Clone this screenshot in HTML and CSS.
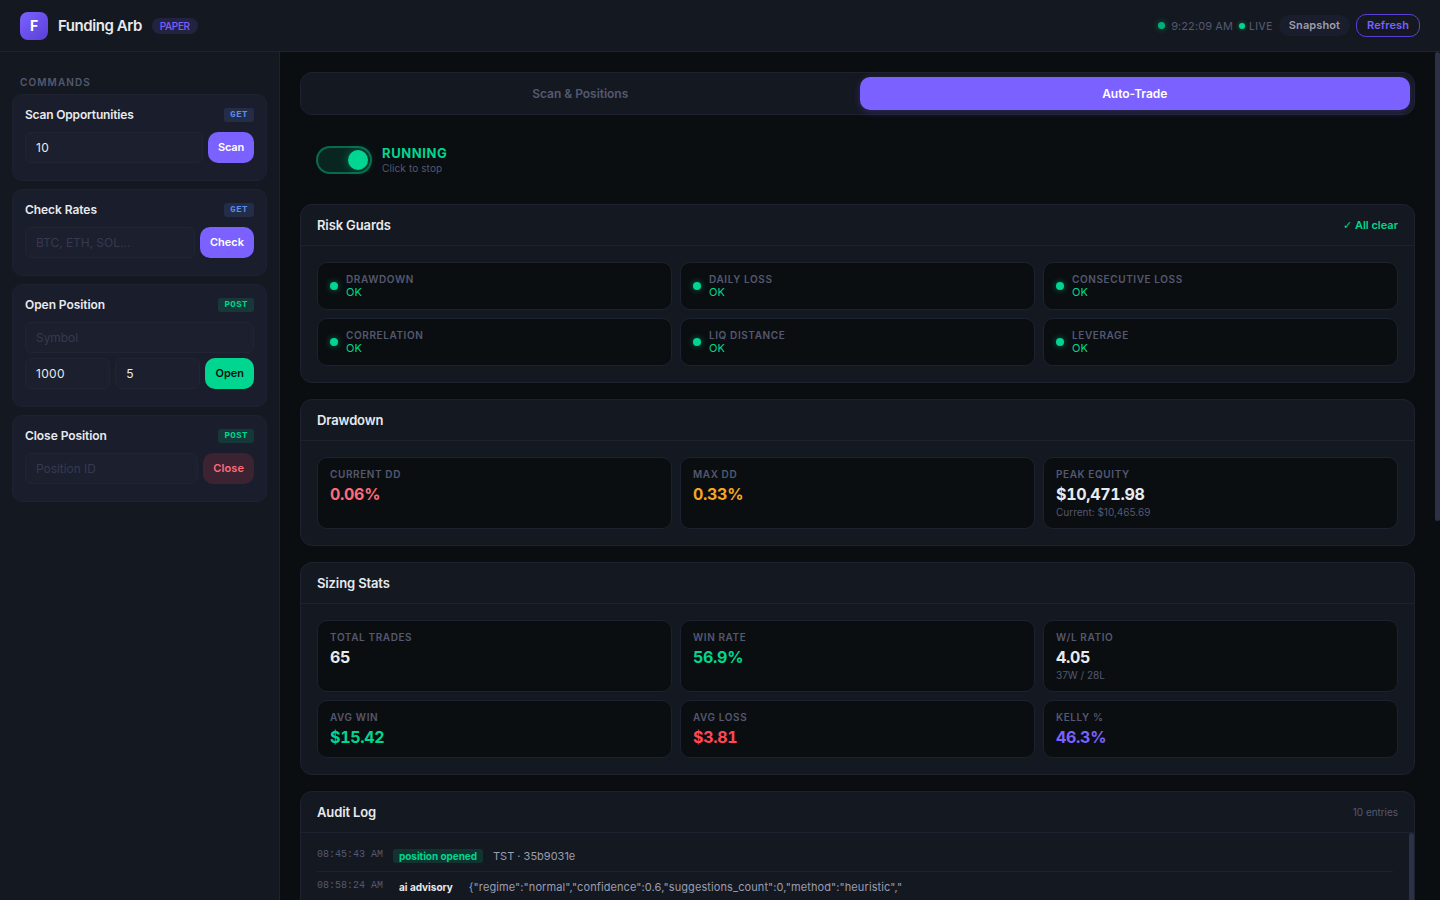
FILE: index.html
```html
<!DOCTYPE html>
<html lang="en">
<head>
  <meta charset="UTF-8">
  <meta name="viewport" content="width=device-width, initial-scale=1.0">
  <title>Funding Arb</title>
  <link rel="stylesheet" href="styles.css">
</head>
<body>
  <header class="header">
    <div class="logo">
      <div class="logo-icon">F</div>
      <h1>Funding Arb</h1>
      <span class="mode-badge">PAPER</span>
    </div>
    <div class="header-right">
      <span class="status-dot"></span>
      <span class="clock">9:22:09 AM</span>
      <span class="live"><span class="live-dot"></span>LIVE</span>
      <button class="btn-pill">Snapshot</button>
      <button class="btn-pill btn-outline">Refresh</button>
    </div>
  </header>

  <div class="layout">
    <aside class="sidebar">
      <div class="sidebar-title">Commands</div>

      <div class="cmd">
        <div class="cmd-head"><span class="cmd-name tight">Scan Opportunities</span><span class="method get">GET</span></div>
        <div class="cmd-row">
          <input type="text" value="10">
          <button class="btn btn-accent tight">Scan</button>
        </div>
      </div>

      <div class="cmd">
        <div class="cmd-head"><span class="cmd-name">Check Rates</span><span class="method get">GET</span></div>
        <div class="cmd-row">
          <input type="text" placeholder="BTC, ETH, SOL...">
          <button class="btn btn-accent">Check</button>
        </div>
      </div>

      <div class="cmd">
        <div class="cmd-head"><span class="cmd-name">Open Position</span><span class="method post">POST</span></div>
        <div class="cmd-row">
          <input type="text" placeholder="Symbol">
        </div>
        <div class="cmd-row">
          <input type="text" value="1000">
          <input type="text" value="5">
          <button class="btn btn-green">Open</button>
        </div>
      </div>

      <div class="cmd">
        <div class="cmd-head"><span class="cmd-name">Close Position</span><span class="method post">POST</span></div>
        <div class="cmd-row">
          <input type="text" placeholder="Position ID">
          <button class="btn btn-red">Close</button>
        </div>
      </div>
    </aside>

    <main class="main">
      <div class="tabs">
        <button class="tab">Scan &amp; Positions</button>
        <button class="tab active">Auto-Trade</button>
      </div>

      <div class="toggle-row">
        <div class="toggle"><div class="toggle-knob"></div></div>
        <div>
          <div class="toggle-label">RUNNING</div>
          <div class="toggle-hint">Click to stop</div>
        </div>
      </div>

      <section class="card">
        <div class="card-head"><h2>Risk Guards</h2><span class="all-clear"><span class="check">✓</span> All clear</span></div>
        <div class="grid">
          <div class="guard"><span class="guard-dot"></span><div><div class="label">Drawdown</div><div class="guard-value">OK</div></div></div>
          <div class="guard"><span class="guard-dot"></span><div><div class="label">Daily Loss</div><div class="guard-value">OK</div></div></div>
          <div class="guard"><span class="guard-dot"></span><div><div class="label">Consecutive Loss</div><div class="guard-value">OK</div></div></div>
          <div class="guard"><span class="guard-dot"></span><div><div class="label">Correlation</div><div class="guard-value">OK</div></div></div>
          <div class="guard"><span class="guard-dot"></span><div><div class="label">Liq Distance</div><div class="guard-value">OK</div></div></div>
          <div class="guard"><span class="guard-dot"></span><div><div class="label">Leverage</div><div class="guard-value">OK</div></div></div>
        </div>
      </section>

      <section class="card">
        <div class="card-head"><h2>Drawdown</h2></div>
        <div class="grid">
          <div class="stat"><div class="label">Current DD</div><div class="value pink">0.06%</div></div>
          <div class="stat"><div class="label">Max DD</div><div class="value orange">0.33%</div></div>
          <div class="stat"><div class="label">Peak Equity</div><div class="value">$10,471.98</div><div class="sub">Current: $10,465.69</div></div>
        </div>
      </section>

      <section class="card">
        <div class="card-head"><h2>Sizing Stats</h2></div>
        <div class="grid">
          <div class="stat"><div class="label">Total Trades</div><div class="value">65</div></div>
          <div class="stat"><div class="label">Win Rate</div><div class="value green">56.9%</div></div>
          <div class="stat"><div class="label">W/L Ratio</div><div class="value">4.05</div><div class="sub">37W / 28L</div></div>
          <div class="stat"><div class="label">Avg Win</div><div class="value green">$15.42</div></div>
          <div class="stat"><div class="label">Avg Loss</div><div class="value red">$3.81</div></div>
          <div class="stat"><div class="label">Kelly %</div><div class="value accent">46.3%</div></div>
        </div>
      </section>

      <section class="card">
        <div class="card-head"><h2>Audit Log</h2><span class="count">10 entries</span></div>
        <div class="log-wrap">
          <div class="log">
            <div class="log-row">
              <span class="log-time">08:45:43 AM</span>
              <span class="log-event opened">position opened</span>
              <span class="log-detail short">TST · 35b9031e</span>
            </div>
            <div class="log-row">
              <span class="log-time">08:58:24 AM</span>
              <span class="log-event">ai advisory</span>
              <span class="log-detail">{"regime":"normal","confidence":0.6,"suggestions_count":0,"method":"heuristic","</span>
            </div>
          </div>
          <div class="scroll-thumb"></div>
        </div>
      </section>
    </main>
    <div class="main-scroll"><div class="scroll-thumb"></div></div>
  </div>
</body>
</html>
```

FILE: styles.css
```css
:root {
  --bg: #0a0e11;
  --surface: #141820;
  --card: #1a1d2b;
  --input: #1c1f2e;
  --border: #1e2230;
  --text: #e8eaed;
  --text-2: #9a9db0;
  --text-3: #555870;
  --accent: #7b61ff;
  --green: #00d68f;
  --red: #ff4757;
  --pink: #ff6b7a;
  --orange: #f5a623;
  --blue: #5b8def;
  --thumb: #2d3148;
}

* {
  margin: 0;
  padding: 0;
  box-sizing: border-box;
}

body {
  font-family: Inter, "Liberation Sans", sans-serif;
  -webkit-font-smoothing: antialiased;
  background: var(--bg);
  color: var(--text);
  font-size: 13px;
  height: 100vh;
  overflow: hidden;
  display: flex;
  flex-direction: column;
}

button,
input {
  font-family: inherit;
}

/* Header */
.header {
  height: 52px;
  flex-shrink: 0;
  padding: 0 20px;
  display: flex;
  align-items: center;
  justify-content: space-between;
  background: var(--surface);
  border-bottom: 1px solid var(--border);
}

.logo {
  display: flex;
  align-items: center;
  gap: 10px;
}

.logo-icon {
  width: 28px;
  height: 28px;
  border-radius: 8px;
  background: linear-gradient(135deg, #7b61ff, #5a3fd6);
  color: #fff;
  font-size: 14px;
  font-weight: 700;
  display: flex;
  align-items: center;
  justify-content: center;
}

.logo h1 {
  font-size: 15px;
  font-weight: 600;
  letter-spacing: -0.45px;
}

.mode-badge {
  font-size: 10px;
  font-weight: 500;
  line-height: 12px;
  letter-spacing: -0.35px;
  padding: 2px 8px;
  border-radius: 20px;
  background: rgba(123, 97, 255, 0.15);
  color: var(--accent);
}

.header-right {
  display: flex;
  align-items: center;
  gap: 6px;
}

.status-dot,
.live-dot,
.guard-dot {
  border-radius: 50%;
  background: var(--green);
  flex-shrink: 0;
}

.status-dot {
  width: 7px;
  height: 7px;
  opacity: 0.8;
  box-shadow: 0 0 6px rgba(0, 214, 143, 0.6);
}

.clock {
  font-size: 11px;
  color: var(--text-3);
  letter-spacing: 0.08px;
}

.live {
  display: flex;
  align-items: center;
  gap: 4px;
  font-size: 10px;
  font-weight: 500;
  letter-spacing: 0.6px;
  color: var(--text-3);
}

.live-dot {
  width: 6px;
  height: 6px;
  box-shadow: 0 0 4px rgba(0, 214, 143, 0.5);
}

.btn-pill {
  font-size: 11px;
  font-weight: 600;
  line-height: 13px;
  letter-spacing: 0.1px;
  padding: 4px 10px;
  border: none;
  border-radius: 10px;
  background: var(--card);
  color: var(--text-2);
}

.btn-outline {
  background: transparent;
  border: 1px solid #5a3fd6;
  color: var(--accent);
}

/* Sidebar */
.layout {
  flex: 1;
  display: flex;
  min-height: 0;
}

.sidebar {
  width: 280px;
  flex-shrink: 0;
  padding: 16px 12px;
  background: var(--surface);
  border-right: 1px solid var(--border);
}

.sidebar-title {
  font-size: 10px;
  font-weight: 600;
  line-height: 12px;
  letter-spacing: 1.1px;
  text-transform: uppercase;
  color: var(--text-3);
  padding: 8px 8px 6px;
}

.cmd {
  padding: 12px;
  margin-bottom: 8px;
  background: var(--card);
  border: 1px solid var(--border);
  border-radius: 10px;
}

.cmd-head {
  display: flex;
  align-items: center;
  justify-content: space-between;
  height: 15px;
  margin-bottom: 10px;
}

.cmd-name {
  font-size: 12px;
  font-weight: 600;
  letter-spacing: -0.06px;
}

.cmd-name.tight {
  letter-spacing: -0.18px;
}

.method {
  font-family: "Liberation Mono", monospace;
  font-size: 9px;
  font-weight: 700;
  line-height: 10px;
  letter-spacing: 0.5px;
  padding: 2px 6px;
  border-radius: 3px;
}

.method.get {
  background: rgba(91, 141, 239, 0.15);
  color: var(--blue);
}

.method.post {
  background: rgba(0, 214, 143, 0.15);
  color: var(--green);
}

.cmd-row {
  display: flex;
  gap: 5px;
  margin-bottom: 5px;
}

.cmd-row input {
  flex: 1;
  width: 0;
  height: 31px;
  padding: 0 10px;
  font-size: 12px;
  letter-spacing: 0.3px;
  color: var(--text);
  background: var(--input);
  border: 1px solid #202433;
  border-radius: 6px;
  outline: none;
}

.cmd-row input::placeholder {
  letter-spacing: -0.05px;
  color: #363a50;
}

.btn {
  height: 31px;
  padding: 0 10px 1px;
  font-size: 11px;
  font-weight: 600;
  border: none;
  border-radius: 10px;
}

.btn-accent {
  background: var(--accent);
  color: #fff;
}

.btn.tight {
  letter-spacing: -0.15px;
}

.btn-green {
  background: var(--green);
  color: #0a0e11;
}

.btn-red {
  background: rgba(255, 77, 94, 0.15);
  color: var(--pink);
  letter-spacing: 0.1px;
}

/* Main */
.main {
  flex: 1;
  padding: 20px;
  overflow: hidden;
}

.main-scroll {
  width: 5px;
}

.scroll-thumb {
  width: 5px;
  height: 469px;
  border-radius: 3px;
  background: var(--thumb);
}

.tabs {
  display: flex;
  gap: 4px;
  height: 43px;
  padding: 4px;
  margin-bottom: 16px;
  background: var(--surface);
  border: 1px solid var(--border);
  border-radius: 12px;
}

.tab {
  flex: 1;
  font-size: 12px;
  font-weight: 600;
  letter-spacing: -0.03px;
  border: none;
  border-radius: 10px;
  background: transparent;
  color: var(--text-3);
}

.tab.active {
  background: var(--accent);
  color: #fff;
  box-shadow: 0 2px 8px rgba(123, 97, 255, 0.25);
}

.toggle-row {
  display: flex;
  align-items: center;
  gap: 10px;
  height: 58px;
  padding: 0 16px;
  margin-bottom: 15px;
}

.toggle {
  display: flex;
  justify-content: flex-end;
  width: 56px;
  height: 28px;
  padding: 2px;
  border: 2px solid rgba(0, 214, 143, 0.4);
  border-radius: 14px;
  background: rgba(0, 214, 143, 0.12);
}

.toggle-knob {
  width: 20px;
  height: 20px;
  border-radius: 50%;
  background: var(--green);
  box-shadow: 0 0 10px rgba(0, 214, 143, 0.4);
}

.toggle-label {
  font-size: 13px;
  font-weight: 700;
  line-height: 16px;
  letter-spacing: 0.6px;
  color: var(--green);
}

.toggle-hint {
  font-size: 10px;
  line-height: 12px;
  letter-spacing: 0.12px;
  margin: 1px 0;
  color: var(--text-3);
}

/* Cards */
.card {
  margin-bottom: 16px;
  background: var(--surface);
  border: 1px solid var(--border);
  border-radius: 12px;
  overflow: hidden;
}

.card-head {
  display: flex;
  align-items: center;
  justify-content: space-between;
  height: 41px;
  padding: 0 16px;
  border-bottom: 1px solid var(--border);
}

.card-head h2 {
  font-size: 13px;
  font-weight: 600;
  letter-spacing: -0.12px;
}

.all-clear {
  font-size: 11px;
  font-weight: 600;
  color: var(--green);
}

.check {
  font-family: "DejaVu Sans", sans-serif;
  font-weight: 400;
}

.count {
  font-size: 10px;
  letter-spacing: -0.05px;
  color: var(--text-3);
}

.grid {
  display: grid;
  grid-template-columns: repeat(3, 1fr);
  gap: 8px;
  padding: 16px;
}

.guard,
.stat {
  background: var(--bg);
  border: 1px solid var(--border);
  border-radius: 10px;
}

.guard {
  display: flex;
  align-items: center;
  gap: 8px;
  height: 48px;
  padding: 0 12px;
}

.guard-dot {
  width: 8px;
  height: 8px;
  box-shadow: 0 0 6px rgba(0, 214, 143, 0.5);
}

.label {
  font-size: 10px;
  font-weight: 600;
  line-height: 12px;
  letter-spacing: 0.6px;
  text-transform: uppercase;
  color: var(--text-3);
}

.guard-value {
  font-size: 11px;
  line-height: 14px;
  color: var(--green);
}

.stat {
  padding: 10px 12px;
}

.value {
  font-size: 16px;
  font-weight: 700;
  font-variant-numeric: tabular-nums;
  line-height: 20px;
  letter-spacing: -0.3px;
  margin-top: 4px;
}

.sub {
  font-size: 10px;
  line-height: 12px;
  margin-top: 2px;
  color: var(--text-3);
}

.green { color: var(--green); }
.red { color: var(--red); }
.pink { color: var(--pink); }
.orange { color: var(--orange); }
.accent { color: var(--accent); }

/* Audit log */
.log-wrap {
  display: flex;
  height: 300px;
}

.log {
  flex: 1;
  padding: 8px 16px;
}

.log-row {
  display: flex;
  align-items: center;
  gap: 10px;
  height: 31px;
  border-bottom: 1px solid var(--border);
}

.log-time {
  font-family: "Liberation Mono", monospace;
  font-size: 10px;
  line-height: 12px;
  margin-bottom: 3px;
  color: var(--text-3);
}

.log-event {
  font-size: 10px;
  font-weight: 700;
  line-height: 12px;
  padding: 1px 6px;
  border-radius: 3px;
}

.log-event.opened {
  background: rgba(0, 214, 143, 0.15);
  color: var(--green);
  letter-spacing: -0.05px;
}

.log-detail {
  font-size: 11px;
  letter-spacing: 0.1px;
  color: var(--text-2);
}

.log-detail.short {
  letter-spacing: 0;
}
```
